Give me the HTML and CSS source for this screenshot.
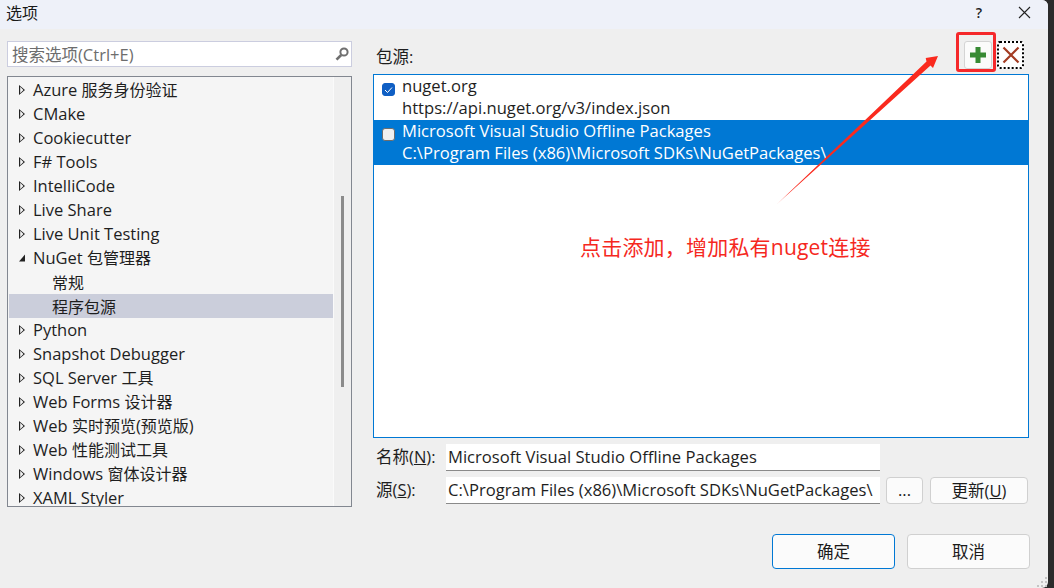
FILE: index.html
```html
<!DOCTYPE html>
<html lang="zh">
<head>
<meta charset="utf-8">
<title>选项</title>
<link rel="stylesheet" href="styles.css">
</head>
<body>
<div class="dialog">
  <header class="titlebar">
    <span class="title">选项</span>
    <div class="winbtns">
      <span class="help">?</span>
      <svg class="close" width="13" height="13" viewBox="0 0 13 13"><path d="M1 1L12 12M12 1L1 12" stroke="#222" stroke-width="1.1" fill="none"/></svg>
    </div>
  </header>
  <main class="content">
    <div class="left">
      <div class="search">
        <span class="ph">搜索选项(Ctrl+E)</span>
        <svg width="16" height="16" viewBox="0 0 16 16"><circle cx="10" cy="6" r="3.6" fill="none" stroke="#6f6f6f" stroke-width="2"/><path d="M7.2 9L2.5 13.7" stroke="#6f6f6f" stroke-width="2.6"/></svg>
      </div>
      <div class="tree">
        <div class="rows">
          <div class="row"><i class="tri"></i><span>Azure <span class="zh">服务身份验证</span></span></div>
          <div class="row"><i class="tri"></i>CMake</div>
          <div class="row"><i class="tri"></i>Cookiecutter</div>
          <div class="row"><i class="tri"></i>F# Tools</div>
          <div class="row"><i class="tri"></i>IntelliCode</div>
          <div class="row"><i class="tri"></i>Live Share</div>
          <div class="row"><i class="tri"></i>Live Unit Testing</div>
          <div class="row"><i class="tri open"></i><span>NuGet <span class="zh">包管理器</span></span></div>
          <div class="row child"><span class="zh">常规</span></div>
          <div class="row child selected"><span class="zh">程序包源</span></div>
          <div class="row"><i class="tri"></i>Python</div>
          <div class="row"><i class="tri"></i>Snapshot Debugger</div>
          <div class="row"><i class="tri"></i><span>SQL Server <span class="zh">工具</span></span></div>
          <div class="row"><i class="tri"></i><span>Web Forms <span class="zh">设计器</span></span></div>
          <div class="row"><i class="tri"></i><span>Web <span class="zh">实时预览</span>(<span class="zh">预览版</span>)</span></div>
          <div class="row"><i class="tri"></i><span>Web <span class="zh">性能测试工具</span></span></div>
          <div class="row"><i class="tri"></i><span>Windows <span class="zh">窗体设计器</span></span></div>
          <div class="row"><i class="tri"></i>XAML Styler</div>
        </div>
        <div class="scrollbar"><div class="thumb"></div></div>
      </div>
    </div>
    <div class="right">
      <div class="srchead">
        <span class="srclabel">包源:</span>
        <div class="tools">
          <button class="tool plus"><svg width="16" height="16" viewBox="0 0 16 16"><path d="M8 0V16M0 8H16" stroke="#388a34" stroke-width="5"/></svg></button>
          <button class="tool del"><svg width="18" height="18" viewBox="0 0 18 18"><path d="M1.5 1.5L16.5 16.5M16.5 1.5L1.5 16.5" stroke="#a33b22" stroke-width="2.2"/></svg></button>
        </div>
      </div>
      <div class="list">
        <div class="item">
          <span class="check on"><svg width="9" height="8" viewBox="0 0 9 8"><path d="M1 4L3.5 6.5L8 1.5" stroke="#fff" stroke-width="1" fill="none"/></svg></span>
          <div class="itemtext"><div>nuget.org</div><div>https://api.nuget.org/v3/index.json</div></div>
        </div>
        <div class="item active">
          <span class="check"></span>
          <div class="itemtext"><div>Microsoft Visual Studio Offline Packages</div><div>C:\Program Files (x86)\Microsoft SDKs\NuGetPackages\</div></div>
        </div>
      </div>
      <div class="field name">
        <label class="flabel">名称(<u>N</u>):</label>
        <div class="input">Microsoft Visual Studio Offline Packages</div>
      </div>
      <div class="field">
        <label class="flabel">源(<u>S</u>):</label>
        <div class="input">C:\Program Files (x86)\Microsoft SDKs\NuGetPackages\</div>
        <button class="btn dots">...</button>
        <button class="btn update">更新(<u>U</u>)</button>
      </div>
    </div>
  </main>
  <footer class="footer">
    <button class="btn big primary">确定</button>
    <button class="btn big">取消</button>
  </footer>
</div>
<svg class="grip" width="11" height="11" viewBox="0 0 11 11"><path d="M8 0h2v2H8zM4 4h2v2H4zM8 4h2v2H8zM0 8h2v2H0zM4 8h2v2H4zM8 8h2v2H8z" fill="#c4c4c4"/></svg>
<div class="redbox"></div>
<svg class="arrow" width="180" height="170" viewBox="0 0 180 170"><defs><linearGradient id="fade" x1="0" y1="1" x2="1" y2="0"><stop offset="0" stop-color="#fa2a1e" stop-opacity="0.35"/><stop offset="0.08" stop-color="#fa2a1e"/></linearGradient></defs><path d="M1 163L151.5 19.5L150.7 16L163 14L158 26L155.5 23.5Z" fill="url(#fade)"/></svg>
<div class="note">点击添加，增加私有nuget连接</div>
</body>
</html>
```
FILE: styles.css
```css
* { box-sizing: border-box; }
html, body { margin: 0; height: 100%; overflow: hidden; }
body {
  position: relative;
  width: 1054px;
  height: 588px;
  background: #2b2b2b;
  font-family: "Open Sans", "Noto Sans CJK SC", sans-serif;
  font-size: 16.5px;
  color: #1e1e1e;
}
.dialog {
  width: 1048px;
  height: 588px;
  background: #efefef;
  display: flex;
  flex-direction: column;
  border-top-right-radius: 6px;
  border-bottom-right-radius: 6px;
}
.titlebar {
  height: 29px;
  flex: none;
  background: #eef1f9;
  display: flex;
  align-items: center;
  justify-content: space-between;
  padding: 0 17px 5px 6px;
  border-top-right-radius: 6px;
}
.title { font-size: 16px; color: #1a1a1a; }
.winbtns { display: flex; align-items: center; gap: 36px; }
.help { font-size: 14px; font-weight: 600; }
.close { display: block; }
.content { display: flex; height: 475px; flex: none; padding: 12px 0 0 7px; }
.left { width: 345px; flex: none; display: flex; flex-direction: column; gap: 9px; }
.search {
  height: 26px;
  background: #fff;
  border: 1px solid #cbcddf;
  display: flex;
  align-items: center;
  justify-content: space-between;
  padding: 0 1px 0 4px;
  flex: none;
}
.ph { color: #6d6d6d; }
.tree {
  height: 431px;
  display: flex;
  border: 1px solid #828790;
  background: #f5f5f5;
  overflow: hidden;
  flex: none;
}
.rows { width: 325px; flex: none; padding: 1px 0 0 1px; background: #f5f5f5; }
.row {
  height: 24px;
  line-height: 24px;
  white-space: nowrap;
  padding-left: 24px;
  display: flex;
  align-items: center;
}
.zh { font-size: 16px; }
.row.child { padding: 1px 0 0 43px; }
.row.selected { background: #cbcedb; }
.tri {
  width: 6px;
  height: 10px;
  margin-left: -14px;
  margin-right: 8px;
  flex: none;
  background: #222;
  clip-path: polygon(0 0, 100% 50%, 0 100%, 0 0, 20% 18%, 20% 82%, 74% 50%, 20% 18%);
}
.tri.open {
  clip-path: polygon(100% 15%, 100% 85%, 0 85%);
}
.scrollbar {
  flex: 1;
  background: #efefef;
  border-left: 1px solid #fafafa;
  padding-top: 119px;
  display: flex;
  justify-content: center;
}
.thumb { width: 3px; height: 191px; background: #8b8b8b; }
.right { width: 656px; margin-left: 21px; flex: none; display: flex; flex-direction: column; }
.srchead { height: 33px; flex: none; display: flex; justify-content: space-between; }
.srclabel { line-height: 24px; padding: 4px 0 0 3px; }
.tools { display: flex; gap: 5px; padding-right: 5px; height: 28px; }
.tool {
  width: 28px; height: 28px; padding: 0;
  display: flex; align-items: center; justify-content: center;
  background: #fbfbfb;
  border: 1px solid #d4d4d4;
  border-radius: 3px;
}
.tool.del { width: 27px; border: 2px dotted #000; background: #fff; }
.list {
  height: 364px;
  background: #fff;
  border: 1px solid #0078d4;
  flex: none;
}
.item { height: 45px; display: flex; padding-left: 8px; line-height: 22px; }
.itemtext { margin-left: 7px; white-space: nowrap; font-size: 16.6px; }
.item.active { background: #0078d4; color: #fff; }
.check {
  width: 13px; height: 13px; margin-top: 8px; flex: none;
  background: #f0f0f0;
  border: 1px solid #6d6d6d;
  border-radius: 3px;
  display: flex; align-items: center; justify-content: center;
}
.check.on { background: #0f5fc4; border-color: #0f5fc4; }
.field { display: flex; align-items: center; height: 27px; margin-top: 6px; }
.flabel { width: 73px; flex: none; padding: 0 0 3px 3px; white-space: nowrap; }
.input {
  width: 434px; height: 27px; flex: none;
  background: #fff;
  border-bottom: 1px solid #8a8a8a;
  padding-left: 2px;
  font-size: 16.6px;
  line-height: 26px;
  white-space: nowrap;
  overflow: hidden;
}
.btn {
  font: inherit;
  color: #1a1a1a;
  background: #fbfbfb;
  border: 1px solid #d0d0d0;
  border-radius: 4px;
  padding: 0 0 2px;
}
.dots { width: 37px; height: 27px; margin-left: 6px; }
.update { width: 98px; height: 27px; margin-left: 7px; }
.footer { display: flex; gap: 12px; padding: 30px 0 0 772px; }
.big { width: 123px; height: 35px; }
.primary { border-color: #0078d4; }
.grip { position: absolute; left: 1037px; top: 577px; }
.redbox {
  position: absolute;
  left: 956px; top: 32px;
  width: 40px; height: 40px;
  border: 3px solid #f5282a;
  border-radius: 3px;
}
.arrow { position: absolute; left: 775px; top: 42px; }
.note {
  position: absolute;
  left: 580px; top: 233px;
  font-size: 21px;
  letter-spacing: 0.2px;
  line-height: 28px;
  color: #f5281e;
  white-space: nowrap;
}
```
